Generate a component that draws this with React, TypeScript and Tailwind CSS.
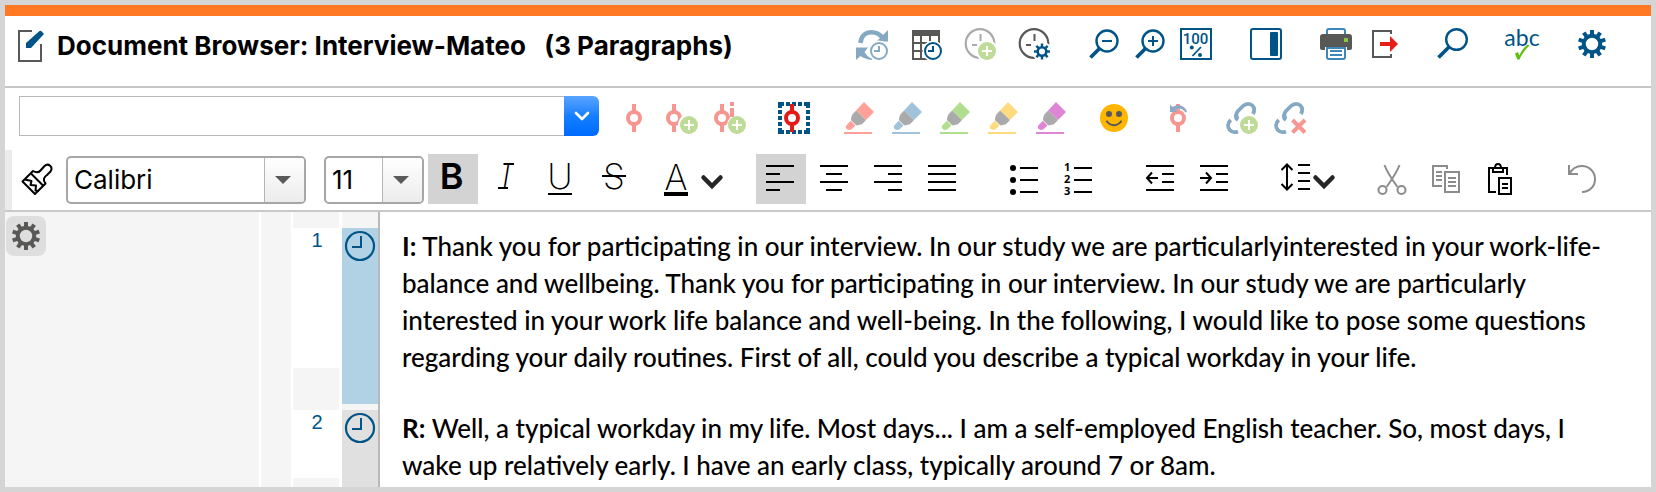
import type { ReactNode } from "react";

const NAVY = "#005487";
const STEEL = "#85a9c3";
const ROSE = "#f79690";
const SLATE = "#585856";

function Svg({ children }: { children: ReactNode }) {
  return (
    <svg viewBox="0 0 32 32" className="block size-8 shrink-0 overflow-visible" fill="none" aria-hidden="true">
      {children}
    </svg>
  );
}

function IconButton({ label, children }: { label: string; children: ReactNode }) {
  return (
    <button type="button" aria-label={label} title={label} className="block size-8 shrink-0">
      <Svg>{children}</Svg>
    </button>
  );
}

function FormatButton({ label, active, children }: { label: string; active?: boolean; children: ReactNode }) {
  return (
    <button
      type="button"
      aria-label={label}
      title={label}
      aria-pressed={active}
      className={active ? "size-[50px] shrink-0 bg-[#d3d3d3] p-2" : "size-[50px] shrink-0 p-2"}
    >
      <Svg>{children}</Svg>
    </button>
  );
}

function PlusBadge() {
  return (
    <>
      <circle cx="23" cy="23" r="11" fill="#fff" />
      <circle cx="23" cy="23" r="9" fill="#bedb98" />
      <path d="M18 23H28M23 18V28" stroke="#fff" strokeWidth="2" />
    </>
  );
}

function ClockBadge({ color }: { color: string }) {
  return (
    <>
      <circle cx="23" cy="23" r="10.5" fill="#fff" />
      <circle cx="23" cy="23" r="8" stroke={color} strokeWidth="2" />
      <path d="M23 18V23H18" stroke={color} strokeWidth="2" />
    </>
  );
}

const TEETH = [0, 36, 72, 108, 144, 180, 216, 252, 288, 324];

function GearShape({ color }: { color: string }) {
  return (
    <>
      <circle cx="16" cy="16" r="8.2" stroke={color} strokeWidth="4" />
      {TEETH.map((angle) => (
        <path key={angle} d="M14 2H18V7H14Z" fill={color} transform={`rotate(${angle} 16 16)`} />
      ))}
    </>
  );
}

function SmallGear() {
  return (
    <>
      <circle cx="24" cy="23.5" r="10" fill="#fff" />
      <circle cx="24" cy="23.5" r="4.3" stroke={NAVY} strokeWidth="2.6" />
      {[0, 45, 90, 135, 180, 225, 270, 315].map((angle) => (
        <path key={angle} d="M22.8 15.5H25.2V19H22.8Z" fill={NAVY} transform={`rotate(${angle} 24 23.5)`} />
      ))}
    </>
  );
}

function DialShape({ color }: { color: string }) {
  return (
    <>
      <circle cx="16" cy="15.5" r="14.3" stroke={color} strokeWidth="2.2" />
      <path d="M16.5 6V13M8 17H13" stroke={color} strokeWidth="2" />
    </>
  );
}

function NodeShape({ x, color }: { x: number; color: string }) {
  return (
    <>
      <path d={`M${x} 2V9M${x} 23V30`} stroke={color} strokeWidth="4" />
      <circle cx={x} cy="16" r="6" stroke={color} strokeWidth="4" />
    </>
  );
}

function LinkShape() {
  return (
    <path
      d="M11.5 16.5C9.8 13.5 10.2 11 12 9L17 4C20 1 24.5 1.300 26.600 3.800C28.600 6 28.600 9 27 12M4.800 18C1.500 21 1.200 25 3.800 28C6 30.300 9 30.600 12 29.400M10 12.500C9.500 15 10.500 17 12 18"
      stroke={STEEL}
      strokeWidth="3.800"
    />
  );
}

function Highlighter({ label, color }: { label: string; color: string }) {
  return (
    <IconButton label={label}>
      <path d="M22 0L32 10L24 18L14 8.500Z" fill={color} />
      <path d="M14 8.500L24 18L20 22.300L14.500 23.500L8.800 18L10 13Z" fill="#aaa" />
      <path d="M8.700 18.700L13.500 23.500L9.500 27.200C6 29.500 2.500 26 4.300 23.500Z" fill={color} />
      <path d="M2 31H30" stroke={color} strokeWidth="2" />
    </IconButton>
  );
}

function Chevron() {
  return (
    <svg viewBox="0 0 24 32" className="block h-8 w-6 shrink-0" fill="none" aria-hidden="true">
      <path d="M3.500 15.500L12 24L20.500 15.500" stroke="#262626" strokeWidth="4.500" strokeLinecap="round" />
    </svg>
  );
}

function Dropdown({ label, options, wide }: { label: string; options: string[]; wide?: boolean }) {
  return (
    <div
      className={
        wide
          ? "grid h-12 w-60 shrink-0 overflow-hidden rounded-[5px] border-2 border-[#a6a6a6] bg-white"
          : "grid h-12 w-[100px] shrink-0 overflow-hidden rounded-[5px] border-2 border-[#a6a6a6] bg-white"
      }
    >
      <select
        aria-label={label}
        className="col-start-1 row-start-1 w-full appearance-none bg-transparent pb-0.5 pl-1.5 font-[Inter,sans-serif] text-[26px] text-black outline-none"
      >
        {options.map((o) => (
          <option key={o}>{o}</option>
        ))}
      </select>
      <span className="pointer-events-none col-start-1 row-start-1 flex w-10 items-center justify-start justify-self-end border-l border-[#b5b5b5] bg-linear-to-b from-white to-[#ececec] pl-2.5">
        <svg viewBox="0 0 16 8" className="h-2 w-4" aria-hidden="true">
          <path d="M0 0H16L8 8Z" fill="#5a5a5a" />
        </svg>
      </span>
    </div>
  );
}

function Header() {
  return (
    <header className="flex h-[72px] items-start justify-between border-b-2 border-[#c6c6c6] pr-[43px] pl-[11px] pt-3">
      <div className="flex items-start gap-[9px] pt-0.5">
        <Svg>
          <path d="M16 1H3V31H25V14" stroke={SLATE} strokeWidth="2" />
          <path d="M10 13L23.500 1Q24.500 0.300 25.500 1.300L28 4L15 18H10Z" fill={NAVY} />
        </Svg>
        <h1 className="font-[Inter,sans-serif] text-[26px] leading-8 font-bold whitespace-pre text-black">
          {"Document Browser: Interview-Mateo   (3 Paragraphs)"}
        </h1>
      </div>
      <div className="flex gap-[38px]">
        <div className="flex gap-[22px]">
          <IconButton label="Refresh timestamps">
            <path d="M4.500 15C5 8 9.500 4.300 15.500 4.300C20 4.300 23.500 6 26.500 9.500" stroke={STEEL} strokeWidth="4.600" />
            <path d="M32 2V13.500H20.500Z" fill={STEEL} />
            <path d="M0 19.500H12L8.500 24C10 27 12.500 29.300 16 30.500V32C11 31.500 7.500 30 4.500 28L0 32Z" fill={STEEL} />
            <ClockBadge color={STEEL} />
          </IconButton>
          <IconButton label="Timestamp table">
            <path d="M2 2H30V8H2Z" fill={SLATE} />
            <path d="M3 8V31H20M3 15H30M3 23H20M11 8V31M20 8V31M29 8V20" stroke={SLATE} strokeWidth="2" />
            <ClockBadge color={NAVY} />
          </IconButton>
          <IconButton label="Add timestamp">
            <DialShape color="#aaaaaa" />
            <PlusBadge />
          </IconButton>
          <IconButton label="Timestamp settings">
            <DialShape color={SLATE} />
            <SmallGear />
          </IconButton>
        </div>
        <div className="flex gap-3.5">
          <IconButton label="Zoom out">
            <circle cx="19" cy="13" r="10.500" stroke={NAVY} strokeWidth="2.400" />
            <path d="M14 13H24" stroke={NAVY} strokeWidth="2" />
            <path d="M11.500 20.500L2.500 29.500" stroke={NAVY} strokeWidth="3.800" />
          </IconButton>
          <IconButton label="Zoom in">
            <circle cx="19" cy="13" r="10.500" stroke={NAVY} strokeWidth="2.400" />
            <path d="M14 13H24M19 8V18" stroke={NAVY} strokeWidth="2" />
            <path d="M11.500 20.500L2.500 29.500" stroke={NAVY} strokeWidth="3.800" />
          </IconButton>
          <IconButton label="Zoom 100 %">
            <rect x="1" y="1" width="30" height="30" stroke={NAVY} strokeWidth="2" />
            <text x="15.500" y="16" textAnchor="middle" className="font-[Roboto,sans-serif] text-[15px] font-medium" fill={NAVY}>
              100
            </text>
            <path d="M12.500 28L21 19" stroke={NAVY} strokeWidth="1.800" />
            <circle cx="11.800" cy="19.500" r="2" fill={NAVY} />
            <circle cx="20" cy="27" r="2" fill={NAVY} />
          </IconButton>
        </div>
        <IconButton label="Toggle sidebar">
          <rect x="1" y="1" width="30" height="30" rx="2" stroke={NAVY} strokeWidth="2" />
          <rect x="20" y="4" width="8" height="24" rx="1" fill={NAVY} />
        </IconButton>
        <div className="flex gap-3.5">
          <IconButton label="Print">
            <path d="M7 8V3Q7 1 9 1H23Q25 1 25 3V8" stroke="#3d87b8" strokeWidth="2" />
            <path d="M3 6H29Q32 6 32 9V20Q32 22 30 22H2Q0 22 0 20V9Q0 6 3 6Z" fill={SLATE} />
            <path d="M24 10H28V14H24Z" fill="#8cc63f" />
            <path d="M5 19H27V22H5Z" fill="#fff" />
            <path d="M7 20H25V29Q25 31 23 31H9Q7 31 7 29Z" fill="#fff" stroke="#3d87b8" strokeWidth="2" />
            <path d="M10 23H22M10 27H22" stroke="#3d87b8" strokeWidth="2" />
          </IconButton>
          <IconButton label="Export">
            <path d="M25 6V3H7V29H25V26" stroke={SLATE} strokeWidth="2" />
            <path d="M14 14H24V8L32 16L24 24V18H14Z" fill="#e71d17" />
          </IconButton>
        </div>
        <IconButton label="Search">
          <circle cx="20.500" cy="11.500" r="10.300" stroke={NAVY} strokeWidth="2.400" />
          <path d="M13 19L2.500 29.500" stroke={NAVY} strokeWidth="3.800" />
        </IconButton>
        <IconButton label="Spell check">
          <text x="16" y="17.500" textAnchor="middle" className="font-[Lato,sans-serif] text-[23px]" fill={NAVY}>
            abc
          </text>
          <path d="M9 25.500L12 24L13.200 27.500C15.500 23 18.500 19 21.500 16.500L23.500 17.500C19 21.500 16 26 13.500 31.500H11.300Z" fill="#5ec00a" />
        </IconButton>
        <IconButton label="Settings">
          <GearShape color={NAVY} />
        </IconButton>
      </div>
    </header>
  );
}

function CodingBar() {
  return (
    <div className="flex h-[62px] items-start gap-[19px] pl-3.5 pt-2">
      <div className="flex h-10 w-[580px] shrink-0">
        <input aria-label="Code" className="min-w-0 flex-1 border border-r-0 border-[#b9b9b9] bg-white px-2 text-2xl outline-none" />
        <button
          type="button"
          aria-label="Show codes"
          className="flex w-[35px] items-center justify-center rounded-r-md bg-linear-to-b from-[#57a3ff] via-[#147fff] to-[#006aff]"
        >
          <svg viewBox="0 0 16 10" className="h-2.5 w-4" fill="none" aria-hidden="true">
            <path d="M2 2L8 8L14 2" stroke="#fff" strokeWidth="2.600" strokeLinecap="round" strokeLinejoin="round" />
          </svg>
        </button>
      </div>
      <div className="flex gap-8 pt-1.5">
        <div className="flex gap-4">
          <IconButton label="Code">
            <NodeShape x={16} color={ROSE} />
          </IconButton>
          <IconButton label="Code with new code">
            <NodeShape x={8} color={ROSE} />
            <PlusBadge />
          </IconButton>
          <IconButton label="Code in vivo">
            <NodeShape x={8} color={ROSE} />
            <circle cx="23" cy="23" r="10" fill="#fff" />
            <path d="M16 0H20V4H16ZM16 6H20V15H16Z" fill={ROSE} />
            <circle cx="23" cy="23" r="9" fill="#bedb98" />
            <path d="M18 23H28M23 18V28" stroke="#fff" strokeWidth="2" />
          </IconButton>
        </div>
        <IconButton label="Highlight coding">
          <path
            d="M0 2H32M0 30H32M2 0V32M30 0V32"
            stroke={NAVY}
            strokeWidth="4"
            strokeDasharray="6 2 4 2 4 2 4 2 6 0"
          />
          <circle cx="14" cy="16" r="10" fill="#fff" />
          <path d="M0 14H4V18H0Z" fill={NAVY} />
          <path d="M14 2V9M14 23V30" stroke="#e31b18" strokeWidth="4" />
          <circle cx="14" cy="16" r="6" stroke="#e31b18" strokeWidth="4" />
        </IconButton>
        <div className="flex gap-4">
          <Highlighter label="Highlight red" color="#ffa198" />
          <Highlighter label="Highlight blue" color="#a0c2da" />
          <Highlighter label="Highlight green" color="#b0de8f" />
          <Highlighter label="Highlight yellow" color="#ffdb80" />
          <Highlighter label="Highlight magenta" color="#de86d5" />
        </div>
        <IconButton label="Emoticode">
          <circle cx="16" cy="16" r="14" fill="#ffb600" />
          <circle cx="11" cy="12" r="3" fill={SLATE} />
          <circle cx="21" cy="12" r="3" fill={SLATE} />
          <path d="M8.500 18.800C12 24.600 20 24.600 23.500 18.800" stroke={SLATE} strokeWidth="2" />
        </IconButton>
        <IconButton label="Undo coding">
          <NodeShape x={16} color={ROSE} />
          <path d="M9 5.500C15 1.500 23 4 25.500 11.500" stroke="#fff" strokeWidth="6" />
          <path d="M14 2H18V4H14Z" fill={ROSE} />
          <path d="M8 2.500L10.500 5C16 1.500 22.500 3 25 9.500L23.500 10.500C21 6.500 17 5.500 13.500 8L15.500 10H8Z" fill="#8ea9c6" />
        </IconButton>
        <div className="flex gap-4">
          <IconButton label="Insert link">
            <LinkShape />
            <PlusBadge />
          </IconButton>
          <IconButton label="Remove link">
            <LinkShape />
            <path d="M15 16H32V32H15Z" fill="#fff" />
            <path d="M18.500 18L31 30.500M31 18L18.500 30.500" stroke={ROSE} strokeWidth="4" />
          </IconButton>
        </div>
      </div>
    </div>
  );
}

function FormatBar() {
  const black = { stroke: "#000", strokeWidth: 2 };
  const grey = { stroke: "#8c8c8c", strokeWidth: 2 };
  return (
    <div className="flex h-[62px] border-b-2 border-[#c9c9c9]">
      <div className="w-[7px] shrink-0 bg-[#ebebeb]" />
      <div className="flex items-start pl-2 pt-1">
        <div className="flex items-center pt-0.5">
          <IconButton label="Copy format">
            <g stroke="#000" strokeWidth="2" strokeLinejoin="round">
              <path d="M13 7L2.500 17.500L15 30L25.500 19.500C22.500 16 24 13 27 11L30.500 7.500C33.500 3 28.500 -1.500 24.500 2L20.500 6.500C18 9.500 15.500 8.500 13 7Z" />
              <path d="M11 9.500L23.500 22M5 15.500L11.500 17L10.500 21L16 21.500L15.500 26.500L18.500 27" />
            </g>
          </IconButton>
          <div className="flex gap-[18px] pl-3.5">
            <Dropdown label="Font" options={["Calibri"]} wide />
            <Dropdown label="Font size" options={["11"]} />
          </div>
        </div>
        <div className="flex gap-1 pl-1">
          <FormatButton label="Bold" active>
            <text x="15.500" y="26" textAnchor="middle" fill="#000" className="font-[Inter,sans-serif] text-[36px] font-semibold">
              B
            </text>
          </FormatButton>
          <FormatButton label="Italic">
            <text x="16" y="26" textAnchor="middle" fill="#000" className="font-[Inter,sans-serif] text-[35px] font-extralight italic">
              I
            </text>
            <path d="M13.500 1H24M8 25H18" {...black} />
          </FormatButton>
          <FormatButton label="Underline">
            <text x="16" y="26" textAnchor="middle" fill="#000" className="font-[Inter,sans-serif] text-[35px] font-extralight">
              U
            </text>
            <path d="M4 31H28" {...black} />
          </FormatButton>
          <FormatButton label="Strikethrough">
            <text x="16" y="26" textAnchor="middle" fill="#000" className="font-[Inter,sans-serif] text-[35px] font-extralight">
              S
            </text>
            <path d="M4 13H28" {...black} />
          </FormatButton>
        </div>
        <button type="button" aria-label="Text colour" title="Text colour" className="ml-5 flex gap-2 py-2">
          <Svg>
            <text x="16" y="28" textAnchor="middle" fill="#000" className="font-[Inter,sans-serif] text-[35px] font-extralight">
              A
            </text>
            <path d="M4 32H28" stroke="#000" strokeWidth="4" />
          </Svg>
          <Chevron />
        </button>
        <div className="flex gap-8 pl-8">
          <div className="flex gap-1">
            <FormatButton label="Align left" active>
              <path d="M2 3H30M2 11H16M2 19H30M2 27H16" {...black} />
            </FormatButton>
            <FormatButton label="Align centre">
              <path d="M2 3H30M8 11H24M2 19H30M8 27H24" {...black} />
            </FormatButton>
            <FormatButton label="Align right">
              <path d="M2 3H30M16 11H30M2 19H30M16 27H30" {...black} />
            </FormatButton>
            <FormatButton label="Justify">
              <path d="M2 3H30M2 11H30M2 19H30M2 27H30" {...black} />
            </FormatButton>
          </div>
          <div className="flex gap-1">
            <FormatButton label="Bulleted list">
              <circle cx="5" cy="5" r="3" fill="#000" />
              <circle cx="5" cy="17" r="3" fill="#000" />
              <circle cx="5" cy="29" r="3" fill="#000" />
              <path d="M12 5H30M12 17H30M12 29H30" {...black} />
            </FormatButton>
            <FormatButton label="Numbered list">
              <g fill="#000" className="font-['Open_Sans',sans-serif] text-[11px] font-bold">
                <text x="2" y="8">1</text>
                <text x="2" y="20">2</text>
                <text x="2" y="32">3</text>
              </g>
              <path d="M12 5H30M12 17H30M12 29H30" {...black} />
            </FormatButton>
          </div>
          <div className="flex gap-1">
            <FormatButton label="Decrease indent">
              <path d="M2 3H30M18 11H30M18 19H30M2 27H30M14 15H3M8 9.500L3 15L8 20.500" {...black} />
            </FormatButton>
            <FormatButton label="Increase indent">
              <path d="M2 3H30M18 11H30M18 19H30M2 27H30M2 15H13M8 9.500L13 15L8 20.500" {...black} />
            </FormatButton>
          </div>
          <button type="button" aria-label="Line spacing" title="Line spacing" className="flex py-2 pl-2">
            <Svg>
              <path d="M18 3H30M18 11H30M18 19H30M18 27H30M7 3V27M1.500 8L7 2.500L12.500 8M1.500 22L7 27.500L12.500 22" {...black} />
            </Svg>
            <Chevron />
          </button>
          <div className="flex gap-1">
            <FormatButton label="Cut">
              <path d="M8.500 2C11 9 15 15 21.500 24M23.500 2C21 9 17 15 10.500 24" {...grey} />
              <circle cx="6.500" cy="27" r="4" {...grey} />
              <circle cx="25.500" cy="27" r="4" {...grey} />
            </FormatButton>
            <FormatButton label="Copy">
              <path d="M17 6V3H3V23H12M6 9H12M6 13H12M6 17H12" {...grey} />
              <path d="M15 9H29V29H15ZM18 15H26M18 19H26M18 23H26" {...grey} />
            </FormatButton>
            <FormatButton label="Paste">
              <path d="M23 12V5H5V29H12M15 15H27V31H15ZM18 21H24M18 25H24" {...black} />
              <path d="M9 5V9H19V5ZM11 5C11 -0.500 17 -0.500 17 5" fill="#fff" {...black} />
            </FormatButton>
          </div>
          <FormatButton label="Undo">
            <path d="M3 2V11H12M3.500 11C6 5.500 11 3 16 3C23 3 29 8.500 29 16C29 23.500 23.500 29 16 29" {...grey} />
          </FormatButton>
        </div>
      </div>
    </div>
  );
}

function ClockMark({ active, label }: { active?: boolean; label: string }) {
  return (
    <button
      type="button"
      aria-label={label}
      className={
        active
          ? "flex w-full flex-1 items-start justify-center bg-[#b1d2e5] pt-0.5"
          : "flex w-full flex-1 items-start justify-center bg-[#e0e0e0] pt-0.5"
      }
    >
      <Svg>
        <circle cx="16" cy="16" r="14" stroke={NAVY} strokeWidth="2.200" />
        <path d="M17 6V17H8" stroke={NAVY} strokeWidth="2" />
      </Svg>
    </button>
  );
}

function NumberCell({ value }: { value: number }) {
  return (
    <div className="flex-1 bg-white pl-0.5 text-center font-['Liberation_Sans',sans-serif] text-xl leading-6 text-[#005487]">
      {value}
    </div>
  );
}

function Document() {
  return (
    <main className="flex flex-1">
      <aside className="w-64 shrink-0 border-r-2 border-white bg-[#f5f5f5] p-px pt-1">
        <button
          type="button"
          aria-label="Coding stripe settings"
          className="flex size-10 items-center justify-center rounded-lg bg-[#dedede]"
        >
          <Svg>
            <GearShape color={SLATE} />
          </Svg>
        </button>
      </aside>
      <div className="w-8 shrink-0 border-r-2 border-white bg-[#f5f5f5]" />
      <div className="flex flex-1 flex-col">
        <div className="flex h-4">
          <div className="w-[49px] shrink-0 border-r-3 border-white bg-[#f5f5f5]" />
          <div className="w-[38px] shrink-0 border-r-2 border-[#b9b9b9] bg-[#f5f5f5]" />
        </div>
        <section className="flex">
          <div className="flex w-[49px] shrink-0 flex-col border-r-3 border-white bg-[#f5f5f5] pb-[42px]">
            <NumberCell value={1} />
          </div>
          <div className="flex w-[38px] shrink-0 flex-col border-r-2 border-[#b9b9b9] bg-[#f5f5f5] pb-1.5">
            <ClockMark active label="Timestamp of paragraph 1" />
          </div>
          <p className="flex-1 pb-[34px] pl-[22px] font-[Lato,sans-serif] text-[26px] leading-[37px] font-medium text-black">
            <b>I:</b> Thank you for participating in our interview. In our study we are particularlyinterested in your work-life-
            <br />
            balance and wellbeing. Thank you for participating in our interview. In our study we are particularly
            <br />
            interested in your work life balance and well-being. In the following, I would like to pose some questions
            <br />
            regarding your daily routines. First of all, could you describe a typical workday in your life.
          </p>
        </section>
        <section className="flex flex-1">
          <div className="flex w-[49px] shrink-0 flex-col border-r-3 border-white bg-[#f5f5f5] pb-[9px]">
            <NumberCell value={2} />
          </div>
          <div className="flex w-[38px] shrink-0 flex-col border-r-2 border-[#b9b9b9] bg-[#f5f5f5]">
            <ClockMark label="Timestamp of paragraph 2" />
          </div>
          <p className="flex-1 pl-[22px] font-[Lato,sans-serif] text-[26px] leading-[37px] font-medium text-black">
            <b>R:</b> Well, a typical workday in my life. Most days... I am a self-employed English teacher. So, most days, I
            <br />
            wake up relatively early. I have an early class, typically around 7 or 8am.
          </p>
        </section>
      </div>
    </main>
  );
}

export default function App() {
  return (
    <div className="flex min-h-screen flex-col bg-[#d5d5d5] p-[5px]">
      <div className="flex flex-1 flex-col bg-white">
        <div className="h-[11px] bg-[#ff7823]" />
        <Header />
        <CodingBar />
        <FormatBar />
        <Document />
      </div>
    </div>
  );
}
